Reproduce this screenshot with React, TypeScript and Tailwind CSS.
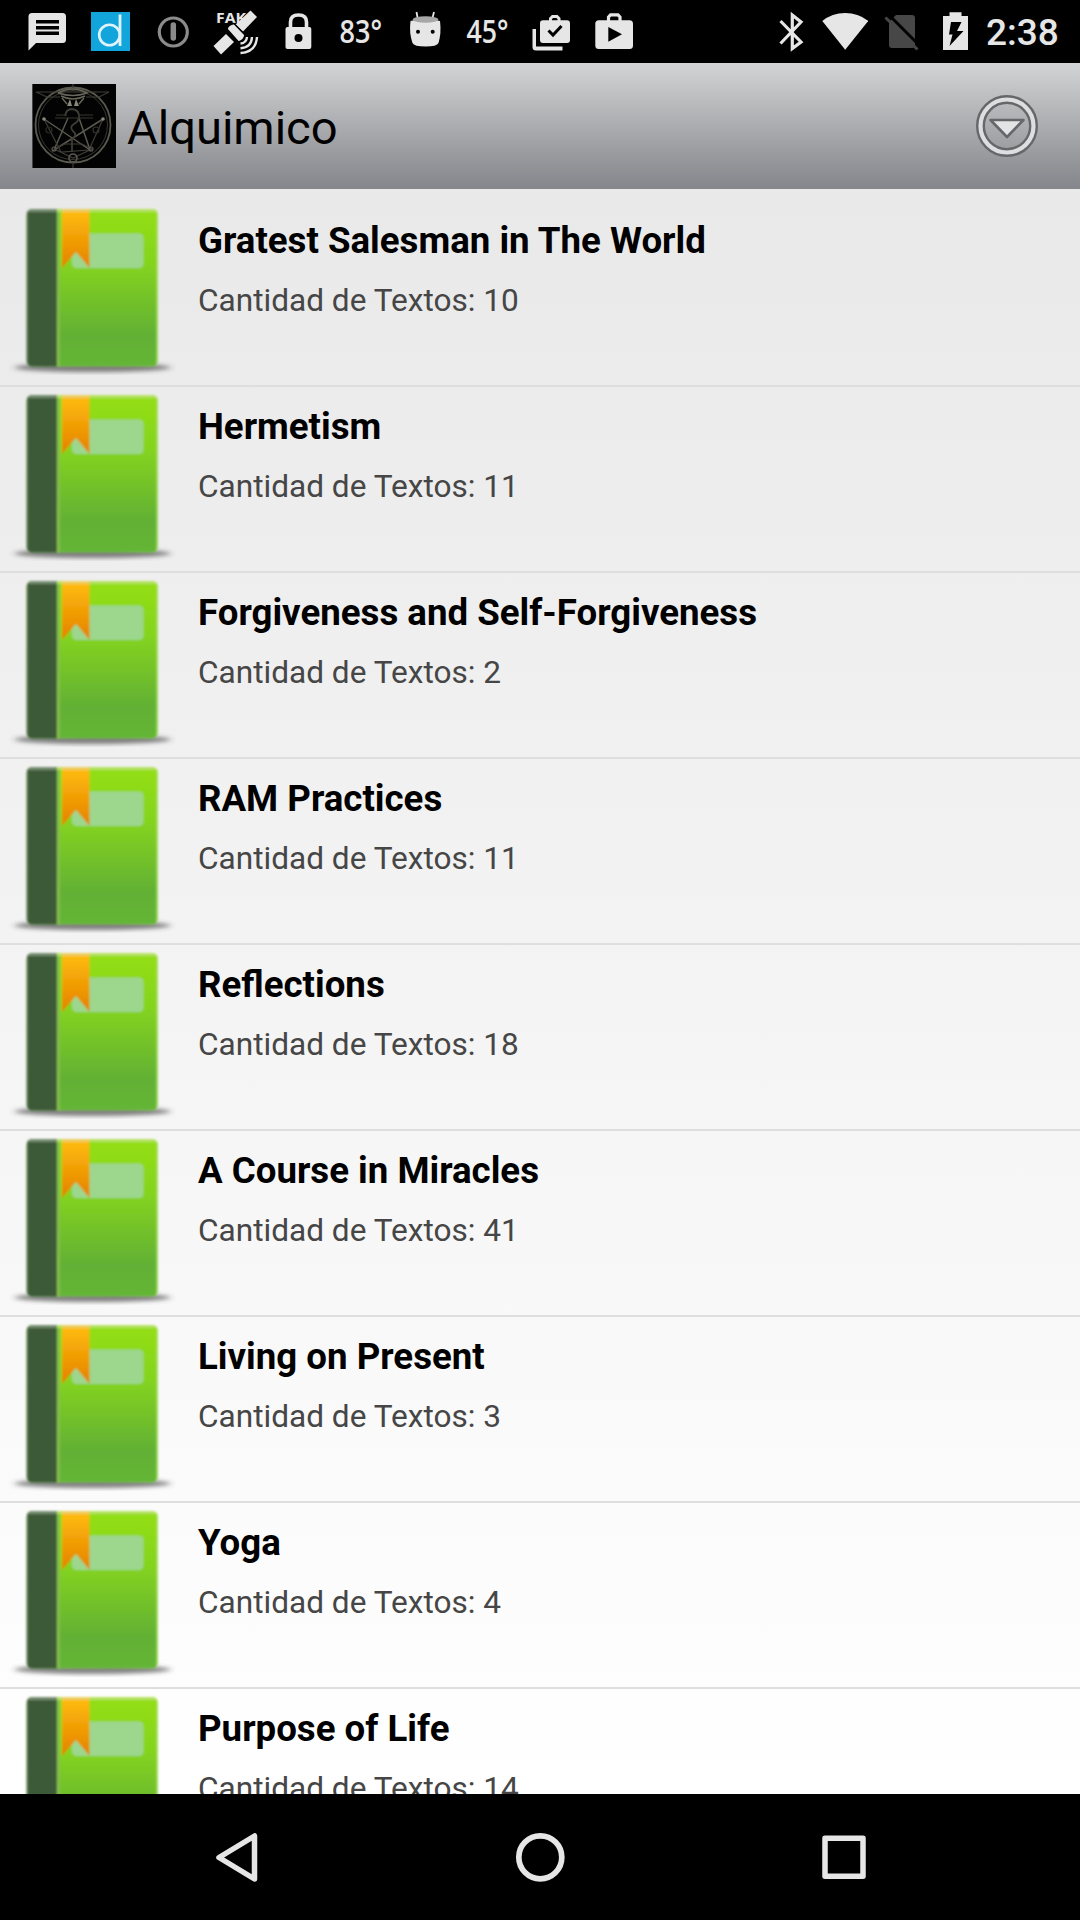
import React from "react";

const books = [
  { title: "Gratest Salesman in The World", count: 10 },
  { title: "Hermetism", count: 11 },
  { title: "Forgiveness and Self-Forgiveness", count: 2 },
  { title: "RAM Practices", count: 11 },
  { title: "Reflections", count: 18 },
  { title: "A Course in Miracles", count: 41 },
  { title: "Living on Present", count: 3 },
  { title: "Yoga", count: 4 },
  { title: "Purpose of Life", count: 14 },
];

function StatusBar() {
  return (
    <div className="flex h-[63px] shrink-0 items-center bg-black text-[#e6e6e6]">
      <svg className="ml-7 h-[63px] w-[40px] shrink-0" viewBox="28 0 40 63" fill="currentColor">
        <path d="M32 13H62.500Q66 13 66 16.500V39.500Q66 43 62.500 43H36L28.500 50.500V16.500Q28.500 13 32 13Z" />
        <path d="M36 20h23v3.600H36zM36 26h23v3.600H36zM36 31.500h23v3.600H36z" fill="#000" />
      </svg>
      <svg className="ml-[22px] h-[63px] w-[42px] shrink-0" viewBox="90 0 42 63">
        <rect x="91" y="12" width="39" height="39" fill="#12a5dc" />
        <circle cx="109.500" cy="35" r="10.300" fill="none" stroke="#dff3fb" strokeWidth="2.600" />
        <path d="M120 14.500V46" stroke="#dff3fb" strokeWidth="2.800" />
      </svg>
      <svg className="ml-[24px] h-[63px] w-[36px] shrink-0" viewBox="156 0 36 63">
        <circle cx="173.300" cy="32" r="14" fill="none" stroke="#8b8b8b" strokeWidth="3.200" />
        <path d="M173.300 25V38" stroke="#8b8b8b" strokeWidth="5.500" strokeLinecap="round" />
      </svg>
      <svg className="ml-[20px] h-[63px] w-[48px] shrink-0" viewBox="212 0 48 63" fill="currentColor">
        <text x="216" y="23" fontSize="13.500" fontFamily="Open Sans, sans-serif" fontWeight="700" textLength="30" lengthAdjust="spacingAndGlyphs">FAK</text>
        <path d="M250.500 10.500L257 17L243 31.500L235.500 24.500Z" />
        <path d="M213.500 46L226 34L234 42L221 54.500Z" />
        <path d="M227 29Q228 24.500 234 23.500L245 35Q244 40.500 238.500 42Z" stroke="#000" strokeWidth="1.400" />
        <g fill="none" stroke="currentColor" strokeWidth="2.400">
          <path d="M247 37Q246.500 43 240.500 43.500" />
          <path d="M252 37Q251.500 47.500 240.500 48.300" />
          <path d="M257 37Q256 52 240.500 53" />
        </g>
      </svg>
      <svg className="ml-[24px] h-[63px] w-[30px] shrink-0" viewBox="284 0 30 63">
        <path d="M290.500 28V22Q290.500 15 298.500 15T306.500 22V28" fill="none" stroke="currentColor" strokeWidth="3.600" />
        <rect x="285.500" y="27" width="25.800" height="22" rx="2" fill="currentColor" />
        <circle cx="298.500" cy="38" r="4" fill="#000" />
      </svg>
      <svg className="ml-[20px] h-[63px] w-[54px] shrink-0" viewBox="334 0 54 63" fill="currentColor">
        <text x="339.500" y="42.500" fontSize="32" fontFamily="Open Sans, sans-serif" fontWeight="600" textLength="42.500" lengthAdjust="spacingAndGlyphs">83°</text>
      </svg>
      <svg className="ml-[20px] h-[63px] w-[34px] shrink-0" viewBox="408 0 34 63">
        <path d="M416.500 12L418 20M434 12L432 20" stroke="currentColor" strokeWidth="1.800" />
        <path d="M410.500 21Q425 17 440 21Q441.500 33 438.500 43Q437 46.500 425.500 46.500T412.500 43Q409 33 410.500 21Z" fill="currentColor" />
        <ellipse cx="425.500" cy="19.500" rx="12.800" ry="3.200" fill="#a7a7a7" />
        <circle cx="418" cy="31.700" r="2" fill="#000" />
        <circle cx="432.700" cy="31.700" r="2" fill="#000" />
      </svg>
      <svg className="ml-[20px] h-[63px] w-[54px] shrink-0" viewBox="462 0 54 63" fill="currentColor">
        <text x="466.500" y="42.500" fontSize="32" fontFamily="Open Sans, sans-serif" fontWeight="600" textLength="42" lengthAdjust="spacingAndGlyphs">45°</text>
      </svg>
      <svg className="ml-[16px] h-[63px] w-[40px] shrink-0" viewBox="532 0 40 63" fill="currentColor">
        <path d="M532.500 29H536V46.500H562.500V50.500H536Q532.500 50.500 532.500 47Z" />
        <rect x="540" y="20.300" width="30" height="22.700" rx="3" />
        <path d="M550.500 21V18.500L552.500 16.500H557L559 18.500V21" fill="none" stroke="currentColor" strokeWidth="3" />
        <path d="M548.500 30.500L553 35L561.500 26" fill="none" stroke="#000" strokeWidth="3" />
      </svg>
      <svg className="ml-[22px] h-[63px] w-[42px] shrink-0" viewBox="594 0 42 63" fill="currentColor">
        <rect x="595.300" y="20.300" width="37.700" height="28.700" rx="3.500" />
        <path d="M608.500 21V17L610.500 14.800H618L620 17V21" fill="none" stroke="currentColor" strokeWidth="3.200" />
        <path d="M608.300 27L622 34.300L608.300 41.800Z" fill="#000" />
      </svg>
      <div className="ml-auto flex items-center">
        <svg className="h-[63px] w-[26px]" viewBox="778 0 26 63">
          <path d="M780.500 21L801 42L792.300 48.500V15L801 22L780.500 43.500" fill="none" stroke="currentColor" strokeWidth="3.200" />
        </svg>
        <svg className="ml-[18px] h-[63px] w-[46px]" viewBox="822 0 46 63">
          <path d="M822.300 21Q832 13 845.200 13T868.300 21L845.200 49.700Z" fill="currentColor" />
        </svg>
        <svg className="ml-[16px] h-[63px] w-[36px]" viewBox="884 0 36 63">
          <path d="M896 15H912Q915 15 915 18V45Q915 48 912 48H892Q889 48 889 45V22Z" fill="#474747" />
          <path d="M889 15L921 47" stroke="#000" strokeWidth="3" />
          <path d="M885.500 17.500L917.500 49.500" stroke="#474747" strokeWidth="3" />
        </svg>
        <svg className="ml-[22px] h-[63px] w-[28px]" viewBox="942 0 28 63">
          <path d="M943 16H949.500V12.300H961.500V16H968V50H943Z" fill="currentColor" />
          <path d="M951 22H961.500L957 31H963.500L949.500 46L952.500 34.500H949Z" fill="#000" />
        </svg>
        <span className="mr-[22px] ml-4 block w-[72px] pt-0.5 text-[37px] leading-[61px] font-medium whitespace-nowrap">2:38</span>
      </div>
    </div>
  );
}

function Emblem() {
  return (
    <svg className="h-[84px] w-[84px] shrink-0" viewBox="0 0 84 84">
      <rect width="84" height="84" fill="#030303" />
      <path d="M.5 0V84" stroke="#444" />
      <g fill="none" stroke="#5a594f" strokeWidth="1.200">
        <circle cx="41" cy="41" r="37.500" strokeWidth="1.800" />
        <circle cx="41" cy="41" r="34.500" strokeWidth=".8" stroke="#45443c" />
        <path d="M41 0V7M41 77V84M4 8H77M4 8L15 13H28M77 8L67 13H54" stroke="#3c3c36" />
        <path d="M26 9Q41 1 55 9Q41 14 26 9M29 12Q41 18 53 12M30 14L35 20M52 14L47 20" stroke="#66665a" strokeWidth="1.500" />
        <path d="M36 34L22 66L71 35M12 35L58 66L47 34" strokeWidth="1.500" />
        <path d="M12 35L29 68L57 66L71 35M22 65L41 74L60 65M22 65L33 60H50L60 65" stroke="#3d3d36" />
        <circle cx="41" cy="74" r="4" strokeWidth="1.600" />
        <circle cx="22" cy="65" r="2" />
        <circle cx="59" cy="65" r="2" />
        <path d="M33 32Q34 25 40 25Q48 26 47 34Q46 38 42 40Q37 43 41 47Q46 51 40 55V68" stroke="#3e3e38" strokeWidth="1.800" />
        <path d="M23 34H61M24 31H35M47 31H61" stroke="#36362f" />
        <circle cx="64" cy="46" r="3" stroke="#33332e" />
        <circle cx="17" cy="46" r="3" stroke="#292925" />
      </g>
      <path d="M35 22L38 15L40 22ZM42 22L44 15L47 22Z" fill="#8a897b" />
      <circle cx="12" cy="35" r="1.800" fill="#8a897b" />
      <circle cx="71" cy="35" r="1.800" fill="#8a897b" />
    </svg>
  );
}

function Header() {
  return (
    <header className="flex h-[126px] shrink-0 items-center bg-linear-to-b from-[#d3d4d5] to-[#85868b] pr-[41px] pl-8">
      <Emblem />
      <h1 className="ml-[11px] pt-[3px] text-[47.1px] leading-[84px] text-black">Alquimico</h1>
      <button className="ml-auto" aria-label="Menu">
        <svg className="block h-[64px] w-[64px]" viewBox="0 0 64 64">
          <circle cx="32" cy="32" r="26.500" fill="none" stroke="#66676a" strokeWidth="9" />
          <circle cx="32" cy="32" r="26.500" fill="none" stroke="#dddedf" strokeWidth="4.200" />
          <path d="M15.500 26H48.500L32 43Z" fill="#e3e4e5" stroke="#66676a" strokeWidth="2.600" strokeLinejoin="round" />
        </svg>
      </button>
    </header>
  );
}

function BookIcon() {
  return (
    <svg className="h-[170px] w-[170px] shrink-0" viewBox="8 205 170 170">
      <defs>
        <linearGradient id="cover" x1="0" y1="0" x2="0" y2="1">
          <stop offset="0" stopColor="#94df14" />
          <stop offset=".35" stopColor="#84d31f" />
          <stop offset=".8" stopColor="#62b034" />
          <stop offset="1" stopColor="#65b637" />
        </linearGradient>
        <linearGradient id="ribbon" x1="0" y1="0" x2="0" y2="1">
          <stop offset="0" stopColor="#ffbd0c" />
          <stop offset="1" stopColor="#e48200" />
        </linearGradient>
        <filter id="shadowBlur" x="-10%" y="-60%" width="120%" height="220%">
          <feGaussianBlur stdDeviation="3 2" />
        </filter>
        <filter id="soften" x="-5%" y="-5%" width="110%" height="110%">
          <feGaussianBlur stdDeviation=".9" />
        </filter>
        <clipPath id="bookShape">
          <rect x="26.700" y="209" width="131" height="157.500" rx="5.500" />
        </clipPath>
      </defs>
      <ellipse cx="92.500" cy="367.500" rx="78" ry="4.500" fill="#444" fillOpacity=".65" filter="url(#shadowBlur)" />
      <g filter="url(#soften)">
        <g clipPath="url(#bookShape)">
          <rect x="26" y="209" width="132" height="158" fill="url(#cover)" />
          <rect x="26" y="209" width="31" height="158" fill="#3c5a37" />
          <path d="M27.500 209V367" stroke="#58734f" strokeWidth="1.500" />
          <path d="M58.300 209V367" stroke="#85bd4f" strokeWidth="3" />
          <path d="M157 209V367" stroke="#a2df5b" strokeWidth="1.500" />
          <path d="M26 210.500H57" stroke="#758c70" strokeWidth="3" />
          <path d="M57 210.500H158" stroke="#b5e261" strokeWidth="3" />
        </g>
        <rect x="72" y="233.500" width="71.500" height="34.500" rx="4.500" fill="#9dd78d" />
        <path d="M62 209.500H89.500V268L76 252L62 268Z" fill="url(#ribbon)" />
        <path d="M62 210.500H89.500" stroke="#edce61" strokeWidth="3" />
      </g>
    </svg>
  );
}

function BookRow({ title, count }: { title: string; count: number }) {
  return (
    <li className="flex h-[186px] shrink-0 border-b-2 border-[#dedede] pt-1 pl-2">
      <BookIcon />
      <div className="pt-[14px] pl-5">
        <h2 className="text-[36.65px] leading-[44px] font-bold whitespace-nowrap text-black">{title}</h2>
        <p className="mt-[19px] text-[31.6px] leading-[38px] whitespace-nowrap text-[#464646]">Cantidad de Textos: {count}</p>
      </div>
    </li>
  );
}

function NavBar() {
  return (
    <nav className="flex h-[126px] shrink-0 items-center justify-center gap-[240px] bg-black">
      <svg className="h-16 w-16" viewBox="0 0 64 64" fill="none" stroke="#e6e6e6" strokeWidth="5.500" strokeLinejoin="round">
        <path d="M50.500 11V54L15 32.500Z" />
      </svg>
      <svg className="h-16 w-16" viewBox="0 0 64 64" fill="none" stroke="#e6e6e6" strokeWidth="5.700">
        <circle cx="32.300" cy="32.300" r="21.500" />
      </svg>
      <svg className="h-16 w-16" viewBox="0 0 64 64" fill="none" stroke="#e6e6e6" strokeWidth="5.500" strokeLinejoin="round">
        <rect x="13" y="13.300" width="38" height="38" />
      </svg>
    </nav>
  );
}

export default function App() {
  return (
    <div className="flex h-[1920px] w-[1080px] flex-col overflow-hidden font-['Roboto',sans-serif]">
      <StatusBar />
      <Header />
      <ul className="flex min-h-0 flex-1 flex-col overflow-hidden bg-linear-to-b from-[#e9e9e9] to-white pt-3">
        {books.map((b) => (
          <BookRow key={b.title} title={b.title} count={b.count} />
        ))}
      </ul>
      <NavBar />
    </div>
  );
}
